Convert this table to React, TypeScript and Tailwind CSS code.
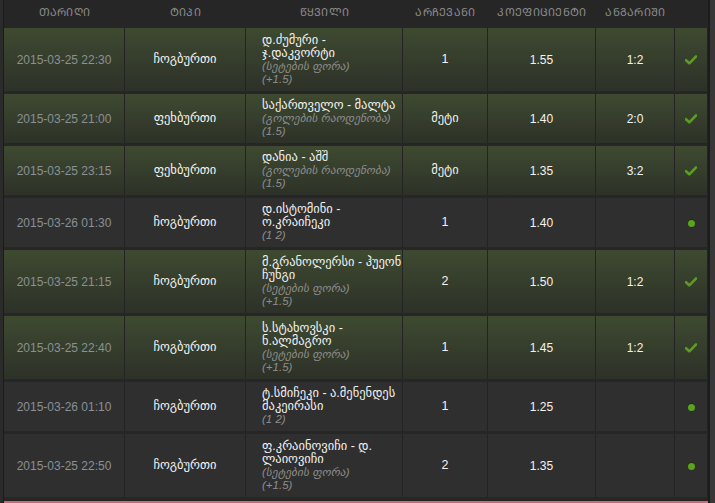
import React from "react";

type Bet = {
  date: string;
  sport: string;
  pair: string[];
  market: string;
  line: string;
  choice: string;
  odds: string;
  score: string;
  won: boolean;
};

// mkhedruli -> mtavruli capitals for the header row
const caps = (s: string) =>
  Array.from(s)
    .map((ch) => {
      const c = ch.charCodeAt(0);
      return c >= 0x10d0 && c <= 0x10fa ? String.fromCharCode(c - 0x10d0 + 0x1c90) : ch;
    })
    .join("");

const HEADERS = ["თარიღი", "ტიპი", "წყვილი", "არჩევანი", "კოეფიციენტი", "ანგარიში", ""];

const BETS: Bet[] = [
  { date: "2015-03-25 22:30", sport: "ჩოგბურთი", pair: ["დ.ძუმური -", "ჯ.დაკვორტი"], market: "(სეტების ფორა)", line: "(+1.5)", choice: "1", odds: "1.55", score: "1:2", won: true },
  { date: "2015-03-25 21:00", sport: "ფეხბურთი", pair: ["საქართველო - მალტა"], market: "(გოლების რაოდენობა)", line: "(1.5)", choice: "მეტი", odds: "1.40", score: "2:0", won: true },
  { date: "2015-03-25 23:15", sport: "ფეხბურთი", pair: ["დანია - აშშ"], market: "(გოლების რაოდენობა)", line: "(1.5)", choice: "მეტი", odds: "1.35", score: "3:2", won: true },
  { date: "2015-03-26 01:30", sport: "ჩოგბურთი", pair: ["დ.ისტომინი -", "ო.კრაიჩეკი"], market: "", line: "(1 2)", choice: "1", odds: "1.40", score: "", won: false },
  { date: "2015-03-25 21:15", sport: "ჩოგბურთი", pair: ["მ.გრანოლერსი - ჰუეონ", "ჩუნგი"], market: "(სეტების ფორა)", line: "(+1.5)", choice: "2", odds: "1.50", score: "1:2", won: true },
  { date: "2015-03-25 22:40", sport: "ჩოგბურთი", pair: ["ს.სტახოვსკი -", "ნ.ალმაგრო"], market: "(სეტების ფორა)", line: "(+1.5)", choice: "1", odds: "1.45", score: "1:2", won: true },
  { date: "2015-03-26 01:10", sport: "ჩოგბურთი", pair: ["ტ.სმიჩეკი - ა.მენენდეს", "მაკეირასი"], market: "", line: "(1 2)", choice: "1", odds: "1.25", score: "", won: false },
  { date: "2015-03-25 22:50", sport: "ჩოგბურთი", pair: ["ფ.კრაინოვიჩი - დ.", "ლაიოვიჩი"], market: "(სეტების ფორა)", line: "(+1.5)", choice: "2", odds: "1.35", score: "", won: false },
];

const WIDTHS = ["w-[121px]", "w-[121px]", "w-[157px]", "w-[85px]", "w-[108px]", "w-[79px]", "w-[33px]"];

function Check() {
  return (
    <svg width="12" height="10" viewBox="0 0 12 10" className="inline-block">
      <path d="M1 5.2 L4.3 8.3 L11 1.5" fill="none" stroke="#5d9b22" strokeWidth="2.6" strokeLinecap="round" strokeLinejoin="round" />
    </svg>
  );
}

function Dot() {
  return <span className="inline-block h-[7px] w-[7px] rounded-full bg-[#5aa21f] shadow-[0_-1px_0_#1d3008]" />;
}

export default function App() {
  return (
    <div className="h-[503px] w-[715px] overflow-hidden bg-[#2a2a2a] font-['Liberation_Sans','DejaVu_Sans',sans-serif]">
      <div className="flex h-full">
        <div className="w-[3px] shrink-0 bg-[#2b2b2b]" />
        <div className="w-[1px] shrink-0 bg-[#1c1c1c]" />
        <div className="flex w-[704px] shrink-0 flex-col bg-[#262626]">
          <table className="w-full table-fixed border-separate border-spacing-x-0 border-spacing-y-[3px] -mt-[3px] text-[12px]">
            <thead>
              <tr className="h-[25px]">
                {HEADERS.map((h, i) => (
                  <th key={i} className={`${WIDTHS[i]} p-0 text-center text-[11px] font-normal tracking-[0.3px] text-[#8c8c8c]`}>
                    {caps(h)}
                  </th>
                ))}
              </tr>
            </thead>
            <tbody>
              {BETS.map((b, r) => {
                const lines = b.pair.length + (b.market ? 1 : 0) + 1;
                const row = b.won
                  ? "bg-gradient-to-b from-[#3e4a30] to-[#2d3128]"
                  : "bg-[#2f2f2f]";
                const cell = "border-r border-[#232323] p-0 text-center align-middle";
                return (
                  <tr key={r} className={`${row} ${lines > 3 ? "h-[63px]" : "h-[49px]"}`}>
                    <td className={`${cell} text-[#8a9096]`}>{b.date}</td>
                    <td className={`${cell} text-[12.5px] text-[#f5f5f5]`}>{b.sport}</td>
                    <td className={`${cell} pl-[16px] pr-0 text-left leading-[13px]`}>
                      {b.pair.map((p) => (
                        <div key={p} className="whitespace-nowrap text-[12.5px] text-[#f2f2f2]">{p}</div>
                      ))}
                      {b.market && <div className="text-[11.5px] italic text-[#8e8e8e]">{b.market}</div>}
                      <div className="text-[11.5px] italic text-[#8e8e8e]">{b.line}</div>
                    </td>
                    <td className={`${cell} text-[12.5px] text-[#f2f2f2]`}>{b.choice}</td>
                    <td className={`${cell} text-[#f2f2f2]`}>{b.odds}</td>
                    <td className={`${cell} text-[#f2f2f2]`}>{b.score}</td>
                    <td className={cell}>{b.won ? <Check /> : <Dot />}</td>
                  </tr>
                );
              })}
            </tbody>
          </table>
          <div className="mt-auto h-[2px] bg-[#c46a78]" />
        </div>
        <div className="w-[2px] shrink-0 bg-[#1c1c1c]" />
        <div className="flex-1 bg-[#383838]" />
      </div>
    </div>
  );
}
